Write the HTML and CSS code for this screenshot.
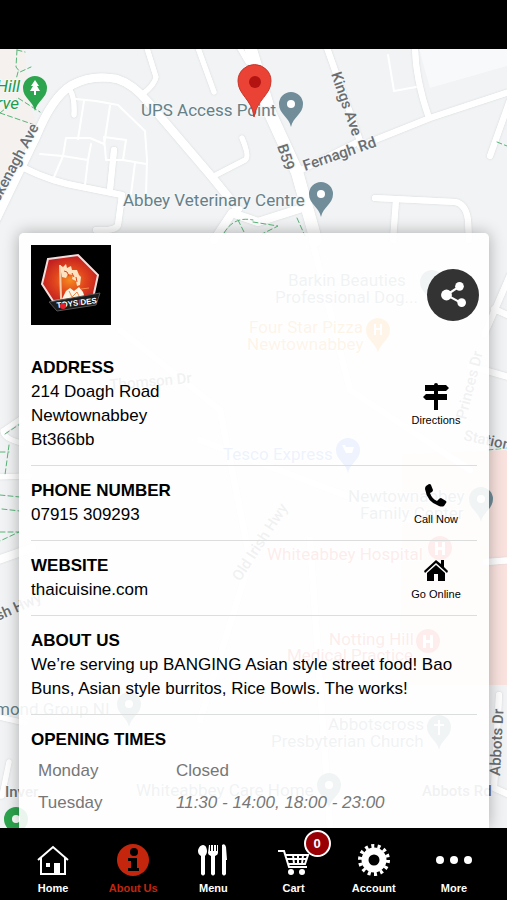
FILE: index.html
```html
<!DOCTYPE html>
<html lang="en">
<head>
  <meta charset="UTF-8" />
  <meta name="viewport" content="width=device-width, initial-scale=1.0" />
  <title>About Us</title>
  <link rel="stylesheet" href="styles.css">
</head>
<body>
  <header class="status-bar"></header>

  <main class="content">
    <svg class="map" viewBox="0 49 507 779" preserveAspectRatio="xMidYMin slice" aria-hidden="true">
      <defs>
        <path id="pin" d="M0 23C-2 13-12 10-12 0a12 12 0 0 1 24 0C12 10 2 13 0 23z" />
        <g id="roads">
          <path d="M-8 228L36 137Q52 97 72 85Q92 74 117 79Q133 84 148 102L212 177L238 209" stroke-width="8" />
          <path d="M146 45L156 77Q155 84 143 94M70 90Q75 98 74 115" stroke-width="5" />
          <path d="M24 168Q52 182 82 187L122 195L118 225Q116 231 96 230M114 150L110 190" stroke-width="6" />
          <path d="M197 45L214 92M238 45L248 62M212 177L245 160Q250 157 242 138" stroke-width="5" />
          <path d="M248 40L270 113L297 172L316 240" stroke-width="12" />
          <path d="M214 240L232 213L258 222L302 208" stroke-width="8" />
          <path d="M326 45L360 141L297 172M360 146L430 118L512 91M415 45Q415 78 429 118" stroke-width="6" />
          <path d="M510 100L490 156M375 198L455 202Q466 204 468 220L469 240M396 200L393 240" stroke-width="6" />
          <path d="M510 275L484 335M494 309L512 317M470 366L512 378M486 562L512 560M499 695L494 788L512 796" stroke-width="6" />
          <path d="M22 418L3 431Q4 439 22 443M-5 477L30 476M-5 716L25 723M-5 796H2L9 762" stroke-width="5" />
          <path d="M-5 561L32 548" stroke-width="8" />
          <path d="M120 330L220 410L250 560L200 720M312 240L350 390L470 470M200 440L410 520M310 540L330 828" stroke-width="6" />
        </g>
      </defs>

      <rect class="land" y="49" width="507" height="779" />
      <path class="park" d="M0 49H24L30 105L38 130L0 215z" />
      <path class="plot" d="M419 49H507V66L430 88z" />
      <path class="hospital-area" d="M402 454L507 450V685H400z" />

      <use href="#roads" class="road-edge" />
      <use href="#roads" class="road" />
      <path class="lane" d="M76 99L96 101L118 105L145 131L147 160L146 195M84 101L78 139M110 106L104 145M66 138H90L104 144M66 138L63 156L40 154M63 156L54 177M63 156L88 160L85 185M91 144L88 160M104 137L126 140L123 160H106L104 137M123 160L146 164M135 163L131 194M388 55L394 91L416 87" />
      <path class="trail" d="M17 50L16 67L20 72L31 67M17 50L25 52M18 72L12 95M0 113L18 98L40 112M0 113L35 125M224 233Q234 216 253 220M238 220L245 234M253 222L278 226L262 234M297 218L305 236M497 142L507 146M5 434L20 424M0 452H9M9 445L5 475M0 495L20 497M2 509L20 511M0 532H19L0 541M488 450L507 448" />

      <g class="label muted">
        <text x="141" y="116">UPS Access Point</text>
        <text x="123" y="206">Abbey Veterinary Centre</text>
        <text x="288" y="286">Barkin Beauties</text>
        <text x="275" y="303">Professional Dog...</text>
        <text x="348" y="502">Newtownabbey</text>
        <text x="360" y="519">Family Center</text>
        <text x="-5" y="715">mond Group NI</text>
        <text x="328" y="730">Abbotscross</text>
        <text x="271" y="747">Presbyterian Church</text>
        <text x="136" y="796">Whiteabbey Care Home</text>
      </g>
      <g class="label orange">
        <text x="249" y="333">Four Star Pizza</text>
        <text x="247" y="350">Newtownabbey</text>
      </g>
      <text class="label blue" x="223" y="460">Tesco Express</text>
      <g class="label red">
        <text x="267" y="560">Whiteabbey Hospital</text>
        <text x="329" y="645">Notting Hill</text>
        <text x="287" y="661">Medical Practice</text>
      </g>
      <g class="label green">
        <text x="20" y="92" text-anchor="end">Hill</text>
        <text x="19" y="109" text-anchor="end">rve</text>
      </g>
      <g class="label street">
        <text transform="translate(-5 210) rotate(-62)">ockenagh Ave</text>
        <text transform="translate(331 74) rotate(71)">Kings Ave</text>
        <text transform="translate(305 171) rotate(-19)">Fernagh Rd</text>
        <text transform="translate(277 146) rotate(72)">B59</text>
        <text transform="translate(463 440) rotate(12)">Station</text>
        <text transform="translate(500 776) rotate(-87)">Abbots Dr</text>
        <text transform="translate(466 420) rotate(-76)">Princes Dr</text>
        <text transform="translate(240 582) rotate(-57)">Old Irish Hwy</text>
        <text transform="translate(110 390) rotate(-5)">Thomson Dr</text>
        <text transform="translate(-2 621) rotate(-24)">sh Hwy</text>
        <text x="422" y="796">Abbots Rd</text>
        <text x="5" y="797">Inver</text>
      </g>

      <g class="pin-slate">
        <use href="#pin" x="291" y="104" />
        <use href="#pin" x="321" y="194" />
        <use href="#pin" x="432" y="282" />
        <use href="#pin" x="481" y="499" />
        <use href="#pin" x="129" y="704" />
        <use href="#pin" x="439" y="727" />
        <use href="#pin" x="329" y="785" />
      </g>
      <use href="#pin" class="pin-orange" x="378" y="330" />
      <use href="#pin" class="pin-blue" x="348" y="450" />
      <g class="pin-red">
        <circle cx="440" cy="548" r="12" />
        <circle cx="428" cy="641" r="12" />
      </g>
      <g class="pin-green">
        <use href="#pin" x="35" y="88" />
        <use href="#pin" x="16" y="819" />
      </g>
      <g fill="#fff">
        <circle cx="291" cy="104" r="4" />
        <circle cx="321" cy="194" r="4" />
        <circle cx="481" cy="499" r="4" />
        <circle cx="129" cy="704" r="4" />
        <circle cx="329" cy="785" r="4" />
        <circle cx="16" cy="819" r="4" />
        <path d="M35 80L31 86H33L30 91H34V95H36V91H40L37 86H39z" />
        <path d="M438 720h2v4h4v2h-4v9h-2v-9h-4v-2h4zM374 324h2v4h4v-4h2v11h-2v-5h-4v5h-2zM342 445h3l1 2h8l-2 6h-6z" />
        <path d="M435 542h3v5h4v-5h3v13h-3v-5h-4v5h-3zM423 635h3v5h4v-5h3v13h-3v-5h-4v5h-3z" />
      </g>
      <path class="marker" d="M254 117C252 99 238 95 238 81a16.500 16.500 0 0 1 33 0C271 95 257 99 254 117z" />
      <circle cx="255" cy="82" r="6" fill="#b31412" />
    </svg>

    <article class="card">
      <div class="card-head">
        <svg class="logo" viewBox="0 0 80 80" role="img" aria-label="Restaurant logo">
          <defs>
            <radialGradient id="ember" cx="50%" cy="55%" r="55%">
              <stop offset="0" stop-color="#f58a1f" />
              <stop offset="0.5" stop-color="#e0451c" />
              <stop offset="1" stop-color="#c01d22" />
            </radialGradient>
          </defs>
          <rect width="80" height="80" />
          <path d="M17 14L47 10L67 30L62 53L22 56L11 39z" fill="url(#ember)" stroke="#f3dedb" stroke-width="2" />
          <path d="M29 20L30 54" stroke="#f7cdaa" stroke-width="2" />
          <path d="M29 20l3 2 3-3 1 4 4-2 1 4 5 0 2 5 2 2-1 8-3 1-1-5-4-2 1-4-5-1-2 4-4-1-1-5z" fill="#ffe3c0" />
          <path d="M33 26l3 1 2 4M41 28l2 4M45 32l1 5" fill="none" stroke="#db431d" stroke-width="1" />
          <path d="M31 54l4-8 4-3 4 3 5-4 4 5 2 6z" fill="#fff6e5" />
          <path d="M38 46l3 6 5-5 3 6M50 44l8-1" fill="none" stroke="#f28a4b" stroke-width="1" />
          <path d="M18 57L69 48L65 60L26 66z" fill="#1c1c1c" stroke="#555" stroke-width="1" />
          <text x="26" y="63" class="logo-text" transform="rotate(-7 26 63)">TOYS<tspan fill="#e3263c">I</tspan>DES</text>
          <circle cx="32" cy="61" r="3" fill="#e8202c" />
        </svg>
        <button class="share" type="button" aria-label="Share">
          <svg viewBox="0 0 24 24">
            <path d="M18 4L6 12L19 19" fill="none" stroke="#fff" stroke-width="2" />
            <circle cx="6" cy="12" r="5" fill="#fff" />
            <circle cx="18" cy="4" r="4" fill="#fff" />
            <circle cx="20" cy="19" r="4" fill="#fff" />
          </svg>
        </button>
      </div>

      <section class="row">
        <div>
          <h2>ADDRESS</h2>
          <p>214 Doagh Road<br>Newtownabbey<br>Bt366bb</p>
        </div>
        <a class="action" href="#directions">
          <svg viewBox="0 0 26 28">
            <path d="M11 3a2 2 0 0 1 4 0h8l3 3-3 3H15v3h9v6H15v10h-4V18H3l-3-3 3-3h8V9H2V3z" />
          </svg>
          Directions
        </a>
      </section>

      <section class="row">
        <div>
          <h2>PHONE NUMBER</h2>
          <p>07915 309293</p>
        </div>
        <a class="action" href="#call">
          <svg viewBox="0 0 26 28">
            <path d="M3 5l3-2q2 0 2 1l2 5q0 1-1 2l-2 1q2 6 7 8l2-2q1-1 2-1l5 3q1 1 0 2l-2 3q-2 1-5 0Q4 21 2 8q0-2 1-3z" />
          </svg>
          Call Now
        </a>
      </section>

      <section class="row">
        <div>
          <h2>WEBSITE</h2>
          <p>thaicuisine.com</p>
        </div>
        <a class="action" href="#online">
          <svg viewBox="0 0 26 28">
            <path d="M13 4L1 15l1 2L13 7l11 10 1-2-4-4V4h-3v4z" />
            <path d="M13 9L4 17v8h7v-7h4v7h7v-8z" />
          </svg>
          Go Online
        </a>
      </section>

      <section class="row">
        <div>
          <h2>ABOUT US</h2>
          <p>We’re serving up BANGING Asian style street food! Bao Buns, Asian style burritos, Rice Bowls. The works!</p>
        </div>
      </section>

      <section class="row">
        <div>
          <h2>OPENING TIMES</h2>
          <table class="times">
            <tbody>
              <tr><th scope="row">Monday</th><td>Closed</td></tr>
              <tr><th scope="row">Tuesday</th><td><em>11:30 - 14:00, 18:00 - 23:00</em></td></tr>
            </tbody>
          </table>
        </div>
      </section>
    </article>
  </main>

  <nav class="tab-bar">
    <a href="#home">
      <svg viewBox="0 0 32 32">
        <path d="M1 16L16 3l15 13M4 14v16h24V14" fill="none" stroke="currentColor" stroke-width="2" />
        <path d="M17 19h6v11h-6zM9 19h4v4H9z" />
      </svg>
      Home
    </a>
    <a href="#about" class="active">
      <svg viewBox="0 0 32 32">
        <circle cx="16" cy="16" r="16" />
        <circle cx="17" cy="8" r="4" fill="#000" />
        <path d="M11 14h9v10h2v3H11v-3h3v-7h-3z" fill="#000" />
      </svg>
      About Us
    </a>
    <a href="#menu">
      <svg viewBox="0 0 32 32">
        <path d="M6 1c3 0 4 4 4 6 0 2-1 4-2 5v18q-2 3-4 0V12C2 11 1 9 1 7c0-2 2-6 5-6z" />
        <path d="M12 1h1v6h1V1h2v6h1V1h2v6h1V1h1v8q0 2-3 3v18q-2 3-4 0V12q-3-1-3-3z" />
        <path d="M25 1q3-2 4 2l1 13h-1v14q-2 3-4 0z" />
      </svg>
      Menu
    </a>
    <a href="#cart">
      <svg viewBox="0 0 32 32">
        <path d="M0 7h6l5 16h18M8 11h22l-3 9H10M9 15h20M15 11l1 9M20 11v9M25 11l-1 9" fill="none" stroke="currentColor" stroke-width="2" />
        <circle cx="13" cy="28" r="3" />
        <circle cx="24" cy="28" r="3" />
      </svg>
      Cart
      <span class="badge">0</span>
    </a>
    <a href="#account">
      <svg viewBox="0 0 32 32">
        <circle cx="16" cy="16" r="9" fill="none" stroke="currentColor" stroke-width="7" />
        <circle cx="16" cy="16" r="14" fill="none" stroke="currentColor" stroke-width="4" stroke-dasharray="3 3.283" />
      </svg>
      Account
    </a>
    <a href="#more">
      <svg class="dots" viewBox="0 0 38 32">
        <circle cx="5" cy="16" r="4" />
        <circle cx="19" cy="16" r="4" />
        <circle cx="33" cy="16" r="4" />
      </svg>
      More
    </a>
  </nav>
</body>
</html>
```

FILE: styles.css
```css
:root {
  --accent: #c3260c;
  --divider: #dcdddd;
}

* {
  box-sizing: border-box;
}

body {
  margin: 0;
  height: 100vh;
  display: flex;
  flex-direction: column;
  overflow: hidden;
  background: #000;
  color: #000;
  font-family: "Liberation Sans", Arial, sans-serif;
  font-size: 17px;
}

a {
  color: inherit;
  text-decoration: none;
}

.status-bar {
  flex: none;
  height: 49px;
}

.content {
  position: relative;
  flex: 1;
  min-height: 0;
  display: flex;
  overflow: hidden;
}

/* Map */
.map {
  position: absolute;
  inset: 0;
  width: 100%;
  height: 100%;
}
.land { fill: #f1f3f4; }
.park { fill: #f4f1ef; }
.plot { fill: #f8f9fa; }
.hospital-area { fill: #fae3df; }
.road, .road-edge, .lane, .trail {
  fill: none;
  stroke-linecap: round;
  stroke-linejoin: round;
}
.road { stroke: #fff; }
.road-edge {
  stroke: #fff;
  filter: drop-shadow(0 0 1px #d3d6d9);
}
.lane { stroke: #fff; stroke-width: 2; }
.trail {
  stroke: #58b578;
  stroke-width: 1;
  stroke-dasharray: 5 3;
}
.label {
  font-family: Roboto, sans-serif;
  font-size: 17px;
  stroke: #f5f7f8;
  stroke-width: 2;
  paint-order: stroke;
}
.muted { fill: #668087; }
.orange { fill: #e98a1c; }
.blue { fill: #4e7de0; }
.red { fill: #db4437; }
.green { fill: #1e9b4b; font-style: italic; }
.street { fill: #6b6e71; font-size: 15px; font-weight: 500; }
.pin-slate { fill: #708d99; }
.pin-orange { fill: #f29b1d; }
.pin-blue { fill: #5181e8; }
.pin-red { fill: #e5544a; }
.pin-green { fill: #2da44e; }
.marker { fill: #ea4335; stroke: #c5372c; }

/* Info card */
.card {
  position: relative;
  flex: 1;
  margin: 184px 18px 0 19px;
  padding-top: 12px;
  border-radius: 5px 5px 0 0;
  background: rgba(255, 255, 255, 0.9);
  box-shadow: 0 0 16px rgba(0, 0, 0, 0.3);
}
.card-head {
  display: flex;
  justify-content: space-between;
  align-items: flex-end;
  padding: 0 10px 18px 12px;
}
.logo {
  width: 80px;
  height: 80px;
}
.logo-text {
  fill: #fff;
  font-size: 8px;
  font-weight: bold;
}
.share {
  width: 52px;
  height: 52px;
  margin-bottom: 4px;
  padding: 13px;
  border: none;
  border-radius: 50%;
  background: #333;
}
.share svg {
  display: block;
  width: 26px;
  height: 26px;
  overflow: visible;
}

.row {
  display: flex;
  justify-content: space-between;
  align-items: center;
  margin: 0 12px;
  padding: 12px 0 13px;
  border-bottom: 1px solid var(--divider);
}
.row:last-child {
  border-bottom: none;
}
.row h2 {
  margin: 0;
  font-size: 17px;
  line-height: 25px;
}
.row p {
  margin: 0;
  line-height: 24px;
}

.action {
  flex: none;
  display: flex;
  flex-direction: column;
  align-items: center;
  gap: 4px;
  width: 82px;
  font-size: 11px;
  line-height: 12px;
}
.action svg {
  width: 26px;
  height: 28px;
}

.times {
  margin-top: 3px;
  border-collapse: collapse;
  color: #777;
  line-height: 32px;
}
.times th, .times td {
  padding: 0 0 0 7px;
  font-weight: normal;
  text-align: left;
}
.times th {
  width: 138px;
}

/* Bottom tabs */
.tab-bar {
  flex: none;
  display: grid;
  grid-template-columns: repeat(6, 1fr);
  height: 72px;
  padding: 0 13px;
  color: #fff;
  font-size: 11px;
  font-weight: bold;
  line-height: 12px;
}
.tab-bar a {
  position: relative;
  display: flex;
  flex-direction: column;
  align-items: center;
  gap: 6px;
  padding-top: 16px;
}
.tab-bar svg {
  width: 32px;
  height: 32px;
  fill: currentColor;
}
.tab-bar .dots {
  width: 38px;
}
.tab-bar .active {
  color: var(--accent);
}
.badge {
  position: absolute;
  top: 2px;
  left: 50%;
  margin-left: 10px;
  width: 27px;
  height: 27px;
  border: 2px solid #fff;
  border-radius: 50%;
  background: #980006;
  font-size: 13px;
  line-height: 23px;
  text-align: center;
}
```
